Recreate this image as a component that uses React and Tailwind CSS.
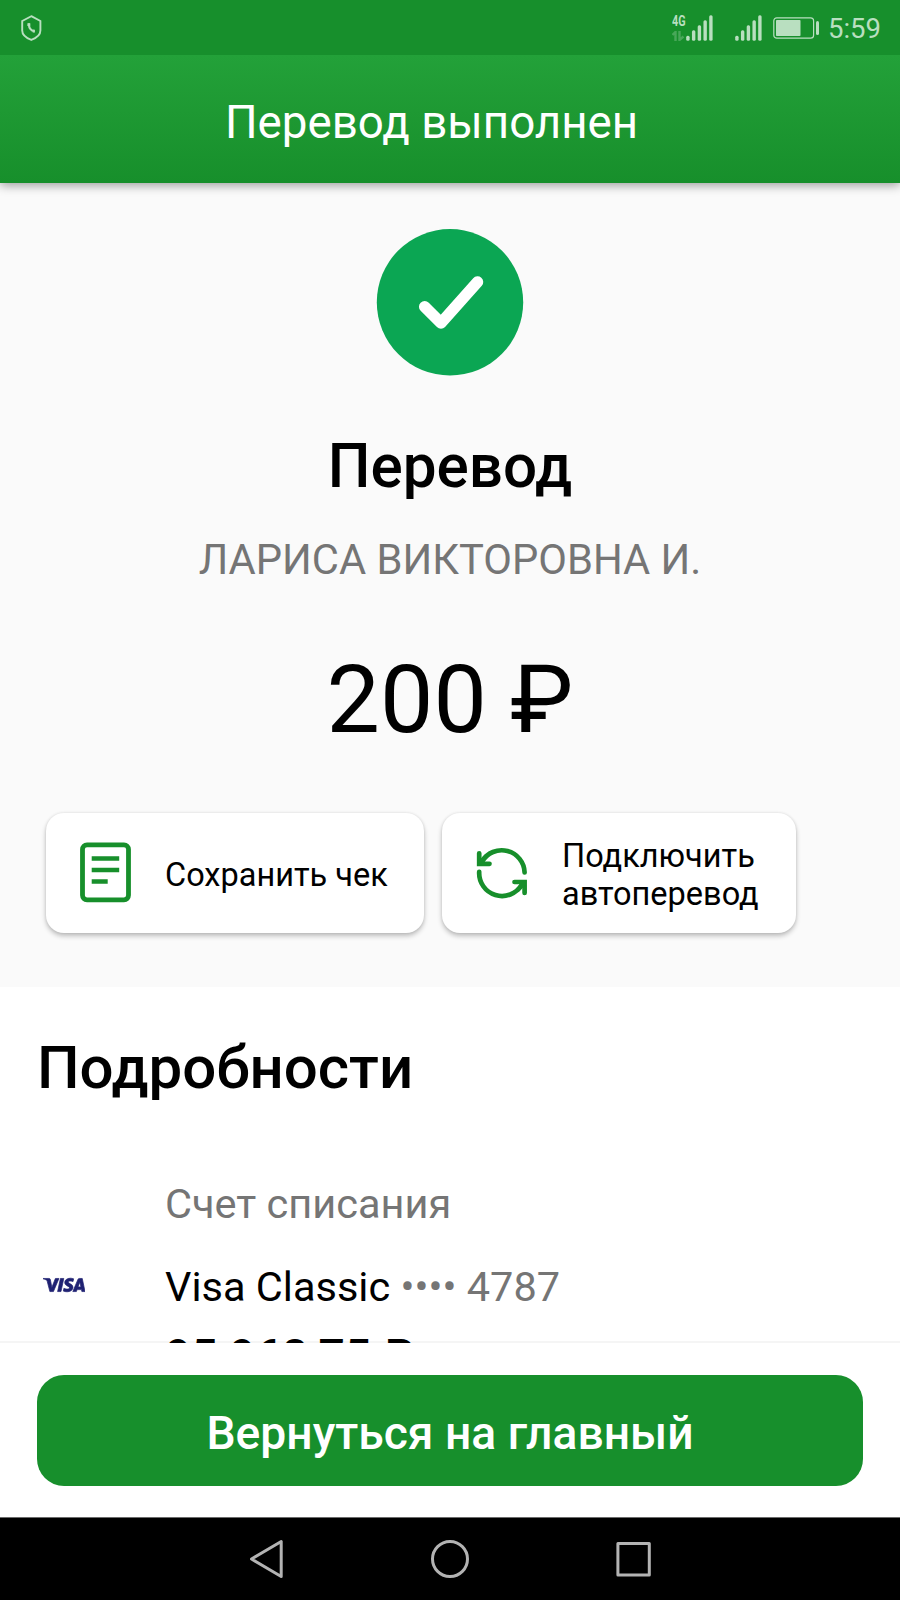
import { SiVisa } from 'react-icons/si'

const BAR_HEIGHTS = [5, 10.5, 15.5, 20.5, 25.5]

function SignalBars() {
  return (
    <svg width="27" height="26" viewBox="0 0 27 26" fill="currentColor">
      {BAR_HEIGHTS.map((h, i) => (
        <rect key={h} x={0.2 + i * 5.75} y={25.7 - h} width="3.4" height={h} rx="1.5" />
      ))}
    </svg>
  )
}

function StatusBar() {
  return (
    <div className="relative z-20 h-[55px] bg-[#178f2c] flex items-center justify-between pl-[21px] pr-[19px] text-[#b9dfc0]">
      <svg width="21" height="26" viewBox="0 0 21 26" fill="none" stroke="currentColor" className="mt-px">
        <path d="M10.3 1.2 19.4 6v9.5c0 4.3-4.2 7.6-9.1 9.4-4.9-1.8-9.1-5.1-9.1-9.4V6Z" strokeWidth="1.9" />
        <path d="M8.2 8.4c-.7 4.3 1.3 7.2 5.5 8.1" strokeWidth="2" />
        <path d="M7.8 8.3v2.7M11.8 16l2 .2" strokeWidth="2.8" />
      </svg>
      <div className="flex items-center">
        <div className="w-[14px] h-[26px] flex flex-col justify-between">
          <div className="w-[18px] origin-left scale-x-[0.72] text-[15px] leading-[13px] font-bold">4G</div>
          <svg width="14" height="10" viewBox="0 0 14 10" fill="none" stroke="currentColor" strokeWidth="2.4" className="opacity-30">
            <path d="M.5 4 3.5 1v9M7.5 0v9l4-3.5" />
          </svg>
        </div>
        <SignalBars />
        <div className="ml-[22px]"><SignalBars /></div>
        <svg width="47" height="22" viewBox="0 0 47 22" className="ml-[11px]">
          <rect x="0.8" y="0.8" width="39.8" height="20.4" rx="3" fill="none" stroke="currentColor" strokeWidth="1.2" />
          <rect x="3" y="3" width="24.5" height="16" rx="0.8" fill="currentColor" />
          <rect x="43" y="4" width="3" height="14" rx="1.5" fill="currentColor" />
        </svg>
        <div className="ml-[8px] text-[27.5px] leading-[34px] mt-[3px]">5:59</div>
      </div>
    </div>
  )
}

function Header() {
  return (
    <div className="relative z-10 h-[128px] pt-[38px] pl-[225px] bg-linear-to-b from-[#23a139] to-[#178f2b] shadow-[0_2px_10px_rgba(0,0,0,0.4)]">
      <h1 className="text-[45.7px] leading-[60px] text-white whitespace-nowrap">Перевод выполнен</h1>
    </div>
  )
}

function ReceiptIcon() {
  return (
    <svg width="51" height="61" viewBox="0 0 51 61" fill="none" stroke="#178f2b" className="shrink-0 -mt-px">
      <rect x="2.5" y="2.8" width="46" height="55" rx="4.5" strokeWidth="4.8" />
      <path d="M11.7 16.5h27.5M11.7 28h27.5M11.7 39.5h16" strokeWidth="4.5" />
    </svg>
  )
}

function RepeatIcon() {
  return (
    <svg width="52" height="52" viewBox="0 0 52 52" fill="none" stroke="#178f2b" strokeWidth="4.7" strokeLinecap="round" strokeLinejoin="round" className="shrink-0 -mt-px">
      <path d="M48.6 25.5A22.9 22.9 0 0 0 6 14.5M3.2 24.9a22.9 22.9 0 0 0 42.5 13" />
      <path d="M3.2 6.3v10.5H13.500M38.500 35H48.6v11" strokeLinejoin="miter" />
      <path d="M4.500 15.500 10 9.500M47.500 36.500 42 42.500" />
    </svg>
  )
}

function ActionCard({ icon, children, className }) {
  return (
    <button className={`h-[120px] flex items-center rounded-[18px] bg-white text-left text-[32.5px] leading-[38.4px] text-black whitespace-nowrap shadow-[0_3px_5px_rgba(0,0,0,0.24),0_0_3px_rgba(0,0,0,0.1)] ${className}`}>
      {icon}
      <span className="mt-[4px]">{children}</span>
    </button>
  )
}

function TransferSummary() {
  return (
    <section className="h-[804px] pt-[46px] bg-[#fafafa]">
      <div className="flex flex-col items-center">
        <svg width="146" height="147" viewBox="0 0 146 147" className="overflow-visible">
          <circle cx="73" cy="73.3" r="73.2" fill="#0ba653" />
          <path d="m47.7 77.7 16.3 16.3 36.5-41" fill="none" stroke="#fff" strokeWidth="11.5" strokeLinecap="round" strokeLinejoin="round" />
        </svg>
        <h2 className="mt-[56px] text-[60.2px] leading-[70px] font-medium text-black">Перевод</h2>
        <p className="mt-[33px] text-[41.7px] leading-[50px] text-[#757575]">ЛАРИСА ВИКТОРОВНА И.</p>
        <p className="mt-[60px] text-[95px] leading-[110px] text-black">200 ₽</p>
      </div>
      <div className="mt-[58px] pl-[46px] flex gap-[18px]">
        <ActionCard icon={<ReceiptIcon />} className="w-[378px] pl-[34px] gap-[34px]">
          Сохранить чек
        </ActionCard>
        <ActionCard icon={<RepeatIcon />} className="w-[354px] pl-[34px] gap-[34px]">
          Подключить<br />автоперевод
        </ActionCard>
      </div>
    </section>
  )
}

function Details() {
  return (
    <section className="h-[356px] pt-[46px] bg-white overflow-hidden shadow-[inset_0_-2px_0_#f5f5f5]">
      <h2 className="pl-[37px] text-[60px] leading-[70px] font-medium text-black">Подробности</h2>
      <div className="mt-[76px] flex text-[41.5px] leading-[50px]">
        <div className="w-[165px] shrink-0 pl-[43px] pt-[85px]">
          <SiVisa className="w-[42px] h-[42px] text-[#1f2172] stroke-[#1f2172] stroke-[0.4px]" />
        </div>
        <div className="whitespace-nowrap">
          <div className="text-[#757575]">Счет списания</div>
          <div className="mt-[33px] text-black">
            Visa Classic <span className="text-[#757575]">•••• 4787</span>
          </div>
          <div className="mt-[19px] text-[46.3px] font-medium text-black">95 968,75 ₽</div>
        </div>
      </div>
    </section>
  )
}

function BottomAction() {
  return (
    <div className="h-[174px] px-[37px] pt-8 bg-white">
      <button className="w-full h-[111px] pt-[5px] rounded-[27px] bg-[#178f2c] text-white text-[46.2px] leading-[60px] font-medium whitespace-nowrap">
        Вернуться на главный
      </button>
    </div>
  )
}

function NavBar() {
  return (
    <div className="h-[83px] pl-[249px] flex items-center bg-black border-t border-[#6b6b6b] text-[#b3b3b3]">
      <svg width="404" height="40" viewBox="0 0 404 40" fill="none" stroke="currentColor" strokeWidth="3" strokeLinejoin="round">
        <path d="M2.5 20 32.2 2.5v35Z" />
        <circle cx="201" cy="20" r="17.5" />
        <rect x="368.9" y="4.6" width="31.4" height="31.4" />
      </svg>
    </div>
  )
}

export default function App() {
  return (
    <div className="w-[900px] h-[1600px] overflow-hidden bg-white font-[Roboto,sans-serif]">
      <StatusBar />
      <Header />
      <TransferSummary />
      <Details />
      <BottomAction />
      <NavBar />
    </div>
  )
}
